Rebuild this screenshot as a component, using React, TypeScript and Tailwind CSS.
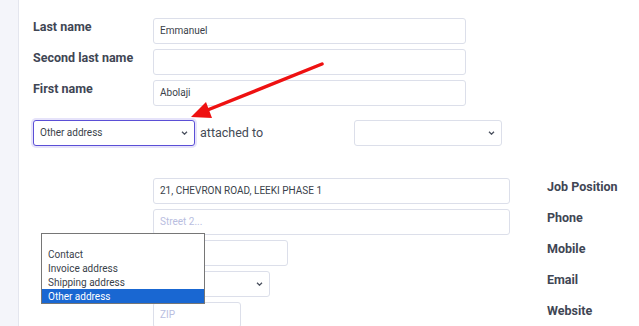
import React from 'react';

const Chevron: React.FC = () => (
  <svg width="7" height="4" viewBox="0 0 7 4" className="text-[#4a505e]">
    <path d="M1 .8l2.5 2.4L6 .8" fill="none" stroke="currentColor" strokeWidth="1.3" />
  </svg>
);

const Field: React.FC<{ w: string; value?: string; placeholder?: string }> = ({ w, value, placeholder }) => (
  <div className={`${w} h-[26px] shrink-0 border border-[#dcdfea] rounded-[3px] bg-white flex items-center px-[6px] text-[10px] leading-none`}>
    {value ? (
      <span className="text-[#3a3f4a]">{value}</span>
    ) : (
      <span className="text-[#b9bedf]">{placeholder}</span>
    )}
  </div>
);

const Select: React.FC<{ w: string; value?: string; focused?: boolean }> = ({ w, value, focused }) => (
  <div
    className={`${w} h-[26px] shrink-0 rounded-[3px] bg-white flex items-center justify-between pl-[6px] pr-[6px] text-[10px] leading-none text-[#3a3f4a] ${
      focused ? 'border border-[#5b4fd6] shadow-[0_0_0_2px_#e6e3fa]' : 'border border-[#dcdfea]'
    }`}
  >
    <span>{value}</span>
    <Chevron />
  </div>
);

const Label: React.FC<{ children: React.ReactNode }> = ({ children }) => (
  <div className="w-[120px] shrink-0 text-[12.5px] leading-[18px] font-bold text-[#3f4654]">{children}</div>
);

const OPTIONS = ['', 'Contact', 'Invoice address', 'Shipping address', 'Other address'];

export default function App() {
  return (
    <div className="relative w-[639px] h-[326px] overflow-hidden flex bg-white font-['Roboto',sans-serif]">
      <div className="w-[19px] shrink-0 bg-[#f4f5fa] border-r border-[#e4e6ee]" />

      <div className="flex-1 pl-[14px] pt-[18px]">
        {/* names */}
        <div className="flex flex-col gap-[5px]">
          <div className="flex">
            <Label>Last name</Label>
            <Field w="w-[313px]" value="Emmanuel" />
          </div>
          <div className="flex">
            <Label>Second last name</Label>
            <Field w="w-[313px]" />
          </div>
          <div className="flex">
            <Label>First name</Label>
            <Field w="w-[313px]" value="Abolaji" />
          </div>
        </div>

        {/* address type */}
        <div className="flex items-center mt-[14px]">
          <Select w="w-[162px]" value="Other address" focused />
          <div className="w-[159px] shrink-0 pl-[5px] text-[12.5px] text-[#444a55]">attached to</div>
          <Select w="w-[148px]" />
        </div>

        {/* address block */}
        <div className="flex mt-[32px]">
          <div className="w-[120px] shrink-0" />
          <div className="w-[357px] shrink-0 flex flex-col gap-[5px]">
            <Field w="w-[357px]" value="21, CHEVRON ROAD, LEEKI PHASE 1" />
            <Field w="w-[357px]" placeholder="Street 2..." />
            <Field w="w-[135px]" placeholder="City" />
            <Select w="w-[117px]" />
            <Field w="w-[88px]" placeholder="ZIP" />
          </div>
          <div className="ml-[37px] flex flex-col gap-[13px]">
            <Label>Job Position</Label>
            <Label>Phone</Label>
            <Label>Mobile</Label>
            <Label>Email</Label>
            <Label>Website</Label>
          </div>
        </div>
      </div>

      {/* open dropdown list */}
      <div className="absolute left-[41px] top-[233px] w-[164px] border border-[#767676] bg-white text-[10px] text-[#3a3f4a]">
        {OPTIONS.map((o, i) => (
          <div
            key={i}
            className={`${i === 0 ? 'h-[13px]' : 'h-[14px]'} flex items-center px-[6px] ${
              o === 'Other address' ? 'bg-[#1967d2] text-white' : ''
            }`}
          >
            {o}
          </div>
        ))}
      </div>

      {/* annotation arrow */}
      <svg className="absolute left-0 top-0 pointer-events-none" width="639" height="326">
        <line x1="322" y1="64" x2="205" y2="111" stroke="#ee1111" strokeWidth="3.5" strokeLinecap="round" />
        <polygon points="191,117 206,102 212,118" fill="#ee1111" />
      </svg>
    </div>
  );
}
